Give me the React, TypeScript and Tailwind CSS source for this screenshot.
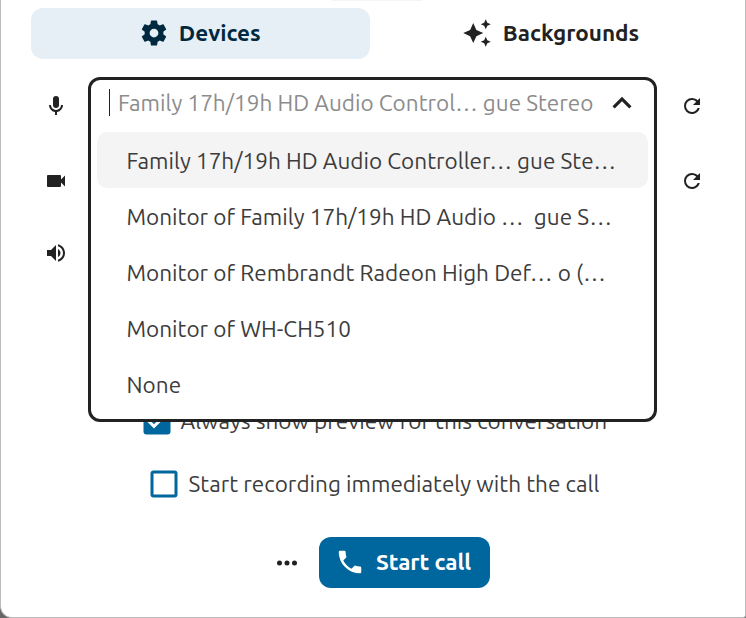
const icons = {
  cog: 'M12,15.5A3.5,3.5 0 0,1 8.5,12A3.5,3.5 0 0,1 12,8.5A3.5,3.5 0 0,1 15.5,12A3.5,3.5 0 0,1 12,15.5M19.43,12.97C19.47,12.65 19.5,12.33 19.5,12C19.5,11.67 19.47,11.34 19.43,11L21.54,9.37C21.73,9.22 21.78,8.95 21.66,8.73L19.66,5.27C19.54,5.05 19.27,4.96 19.05,5.05L16.56,6.05C16.04,5.66 15.5,5.32 14.87,5.07L14.5,2.42C14.46,2.18 14.25,2 14,2H10C9.75,2 9.54,2.18 9.5,2.42L9.13,5.07C8.5,5.32 7.96,5.66 7.44,6.05L4.95,5.05C4.73,4.96 4.46,5.05 4.34,5.27L2.34,8.73C2.21,8.95 2.27,9.22 2.46,9.37L4.57,11C4.53,11.34 4.5,11.67 4.5,12C4.5,12.33 4.53,12.65 4.57,12.97L2.46,14.63C2.27,14.78 2.21,15.05 2.34,15.27L4.34,18.73C4.46,18.95 4.73,19.03 4.95,18.95L7.44,17.94C7.96,18.34 8.5,18.68 9.13,18.93L9.5,21.58C9.54,21.82 9.75,22 10,22H14C14.25,22 14.46,21.82 14.5,21.58L14.87,18.93C15.5,18.67 16.04,18.34 16.56,17.94L19.05,18.95C19.27,19.03 19.54,18.95 19.66,18.73L21.66,15.27C21.78,15.05 21.73,14.78 21.54,14.63L19.43,12.97Z',
  sparkles:
    'M19,1L17.74,3.75L15,5L17.74,6.26L19,9L20.25,6.26L23,5L20.25,3.75M9,4L6.5,9.5L1,12L6.5,14.5L9,20L11.5,14.5L17,12L11.5,9.5M19,15L17.74,17.74L15,19L17.74,20.25L19,23L20.25,20.25L23,19L20.25,17.74',
  mic: 'M12,2A3,3 0 0,1 15,5V11A3,3 0 0,1 12,14A3,3 0 0,1 9,11V5A3,3 0 0,1 12,2M19,11C19,14.53 16.39,17.44 13,17.93V21H11V17.93C7.61,17.44 5,14.53 5,11H7A5,5 0 0,0 12,16A5,5 0 0,0 17,11H19Z',
  video:
    'M17,10.5V7A1,1 0 0,0 16,6H4A1,1 0 0,0 3,7V17A1,1 0 0,0 4,18H16A1,1 0 0,0 17,17V13.5L21,17.5V6.5L17,10.5Z',
  volume:
    'M14,3.23V5.29C16.89,6.15 19,8.83 19,12C19,15.17 16.89,17.84 14,18.7V20.77C18,19.86 21,16.28 21,12C21,7.72 18,4.14 14,3.23M16.5,12C16.5,10.23 15.5,8.71 14,7.97V16C15.5,15.29 16.5,13.76 16.5,12M3,9V15H7L12,20V4L7,9H3Z',
  refresh:
    'M17.65,6.35C16.2,4.9 14.21,4 12,4A8,8 0 0,0 4,12A8,8 0 0,0 12,20C15.73,20 18.84,17.45 19.73,14H17.65C16.83,16.33 14.61,18 12,18A6,6 0 0,1 6,12A6,6 0 0,1 12,6C13.66,6 15.14,6.69 16.22,7.78L13,11H20V4L17.65,6.35Z',
  chevronUp: 'M7.41,15.41L12,10.83L16.59,15.41L18,14L12,8L6,14L7.41,15.41Z',
  dots: 'M16,12A2,2 0 0,1 18,10A2,2 0 0,1 20,12A2,2 0 0,1 18,14A2,2 0 0,1 16,12M10,12A2,2 0 0,1 12,10A2,2 0 0,1 14,12A2,2 0 0,1 12,14A2,2 0 0,1 10,12M4,12A2,2 0 0,1 6,10A2,2 0 0,1 8,12A2,2 0 0,1 6,14A2,2 0 0,1 4,12Z',
  phone:
    'M6.62,10.79C8.06,13.62 10.38,15.94 13.21,17.38L15.41,15.18C15.69,14.9 16.08,14.82 16.43,14.93C17.55,15.3 18.75,15.5 20,15.5A1,1 0 0,1 21,16.5V20A1,1 0 0,1 20,21A17,17 0 0,1 3,4A1,1 0 0,1 4,3H7.5A1,1 0 0,1 8.5,4C8.5,5.25 8.7,6.45 9.07,7.57C9.18,7.92 9.1,8.31 8.82,8.59L6.62,10.79Z',
  checked:
    'M10,17L5,12L6.41,10.58L10,14.17L17.59,6.58L19,8M19,3H5C3.89,3 3,3.89 3,5V19A2,2 0 0,0 5,21H19A2,2 0 0,0 21,19V5C21,3.89 20.1,3 19,3Z',
  unchecked:
    'M19,3H5C3.89,3 3,3.89 3,5V19A2,2 0 0,0 5,21H19A2,2 0 0,0 21,19V5A2,2 0 0,0 19,3M19,5V19H5V5H19Z',
};

function Icon({ name, className }: { name: keyof typeof icons; className: string }) {
  return (
    <svg viewBox="0 0 24 24" fill="currentColor" className={`shrink-0 ${className}`} aria-hidden="true">
      <path d={icons[name]} />
    </svg>
  );
}

const options = [
  'Family 17h/19h HD Audio Controller… gue Ste…',
  'Monitor of Family 17h/19h HD Audio …  gue S…',
  'Monitor of Rembrandt Radeon High Def… o (…',
  'Monitor of WH-CH510',
  'None',
];

function DeviceSelect() {
  return (
    <div className="absolute left-[56px] top-[-16px] h-[345px] w-[569px] rounded-[12px] border-3 border-[#222] bg-white">
      <div className="flex h-[45px] items-center pl-[18px] pr-[13px] text-[#8c8c8c]">
        <span className="h-[27px] w-px bg-[#222]" />
        <span className="ml-[8px] whitespace-pre tracking-[0.02px]">Family 17h/19h HD Audio Control… gue Stereo</span>
        <Icon name="chevronUp" className="ml-auto size-[38px] text-[#222]" />
      </div>
      <ul className="mt-[7px] flex flex-col px-[6px]">
        {options.map((text, i) => (
          <li
            key={text}
            className={`flex h-[56px] items-center whitespace-pre rounded-[10px] pl-[29.5px] pt-[2px] tracking-[0.02px] text-[#3c3c3c] ${i === 0 ? 'bg-[#f4f4f4]' : ''}`}
          >
            {text}
          </li>
        ))}
      </ul>
    </div>
  );
}

export default function App() {
  return (
    <div className="h-[618px] w-[746px] overflow-hidden bg-[#666] font-['Ubuntu','Noto_Sans',sans-serif] text-[22.5px] leading-[30px] text-[#3c3c3c]">
      <main className="flex h-[618px] flex-col rounded-bl-[12px] rounded-br-[3px] border-x border-b border-[#bcbcbc] bg-white">
        <div className="ml-[331px] h-px w-[90px] bg-[#f4f4f4]" />
        <nav className="mt-[7px] flex pl-[29.5px] font-bold">
          <button className="flex h-[51px] w-[339.5px] items-center justify-center gap-[10px] rounded-[12px] bg-[#e5eff5] pb-px pr-px text-[#00293f]">
            <Icon name="cog" className="size-[30px]" />
            Devices
          </button>
          <button className="flex h-[51px] w-[361px] items-center justify-center gap-[11px] pb-px text-[#222]">
            <Icon name="sparkles" className="size-[30px]" />
            Backgrounds
          </button>
        </nav>

        <section className="relative ml-[31px] mr-[41px] mt-[34px] flex h-[172px] flex-col text-[#222]">
          <div className="mt-[0.5px] flex justify-between pl-[12px]">
            <Icon name="mic" className="size-[24px]" />
            <Icon name="refresh" className="size-[24px]" />
          </div>
          <div className="mt-[51.5px] flex justify-between pl-[12px]">
            <Icon name="video" className="size-[24px]" />
            <Icon name="refresh" className="size-[24px]" />
          </div>
          <div className="mt-[48px] flex pl-[12px]">
            <Icon name="volume" className="size-[24px]" />
          </div>
          <DeviceSelect />
        </section>

        <div className="mt-[138px] flex flex-col gap-[27px]">
          <div className="flex h-[36px] items-center pl-[137.5px]">
            <Icon name="checked" className="size-[36px] text-[#00679e]" />
            <span className="ml-[6px]">Always show preview for this conversation</span>
          </div>
          <div className="flex h-[36px] items-center pl-[145px]">
            <Icon name="unchecked" className="size-[36px] text-[#00679e]" />
            <span className="ml-[6.5px] tracking-[0.02px]">Start recording immediately with the call</span>
          </div>
        </div>

        <footer className="mt-[35px] flex items-center pl-[271px]">
          <Icon name="dots" className="size-[30px] text-[#222]" />
          <button className="ml-[17px] flex h-[51px] w-[171px] items-center gap-[11px] rounded-[12px] bg-[#00679e] pb-px pl-[16px] font-bold text-white">
            <Icon name="phone" className="size-[30px]" />
            Start call
          </button>
        </footer>
      </main>
    </div>
  );
}
